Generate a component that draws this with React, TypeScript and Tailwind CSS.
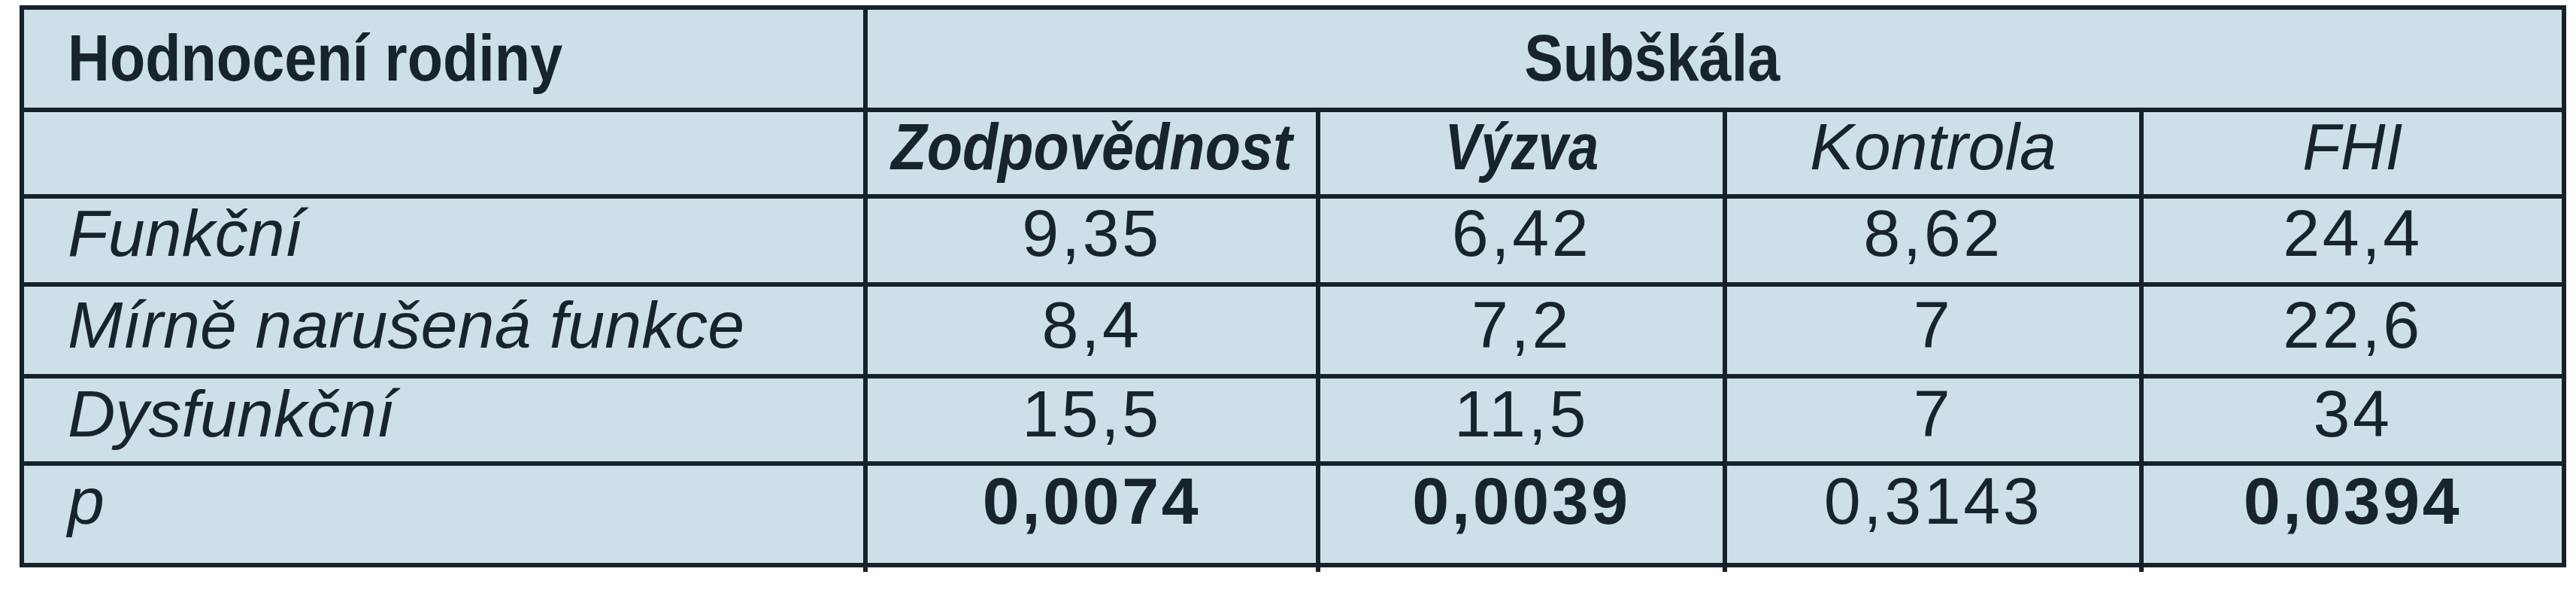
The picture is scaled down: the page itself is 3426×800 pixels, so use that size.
import React from "react";

type Row = {
  label: string;
  values: string[];
  bold: boolean[];
  pad: string;
};

const rows: Row[] = [
  { label: "Funkční", values: ["9,35", "6,42", "8,62", "24,4"], bold: [false, false, false, false], pad: "pt-[2px]" },
  { label: "Mírně narušená funkce", values: ["8,4", "7,2", "7", "22,6"], bold: [false, false, false, false], pad: "pt-[7px]" },
  { label: "Dysfunkční", values: ["15,5", "11,5", "7", "34"], bold: [false, false, false, false], pad: "pt-[3px]" },
  { label: "p", values: ["0,0074", "0,0039", "0,3143", "0,0394"], bold: [true, true, false, true], pad: "pt-[3px]" },
];

const cell = "bg-[#cde0e8]";

export default function App() {
  return (
    <div className="min-h-screen bg-white pl-[26px] pt-[7px] font-['Liberation_Sans',Arial,sans-serif] text-[88px] leading-none text-[#18242b]">
      <div className="w-[3387px]">
        <div className="grid grid-cols-[1116px_596px_535px_548px_556px] grid-rows-[130px_109px_111px_116px_110px_129px] gap-[6px] bg-[#16222a] p-[6px]">
          {/* hlavička */}
          <div className={`${cell} pl-[58px] pt-[20px]`}>
            <span className="inline-block origin-left scale-x-[0.88] font-bold">Hodnocení rodiny</span>
          </div>
          <div className={`${cell} col-span-4 flex justify-center pr-[167px] pt-[20px]`}>
            <span className="inline-block scale-x-[0.88] font-bold">Subškála</span>
          </div>

          <div className={cell} />
          <div className={`${cell} flex justify-center pt-[2px]`}>
            <span className="inline-block scale-x-[0.88] font-bold italic">Zodpovědnost</span>
          </div>
          <div className={`${cell} flex justify-center pt-[2px]`}>
            <span className="inline-block scale-x-[0.82] font-bold italic">Výzva</span>
          </div>
          <div className={`${cell} flex justify-center pt-[2px]`}>
            <span className="italic">Kontrola</span>
          </div>
          <div className={`${cell} flex justify-center pt-[2px]`}>
            <span className="inline-block scale-x-[0.94] italic">FHI</span>
          </div>

          {/* data */}
          {rows.map((r) => (
            <React.Fragment key={r.label}>
              <div className={`${cell} ${r.pad} pl-[58px] italic`}>{r.label}</div>
              {r.values.map((v, i) => (
                <div key={i} className={`${cell} ${r.pad} flex justify-center`}>
                  <span className={`tracking-[0.04em] ${r.bold[i] ? "font-bold" : "font-normal"}`}>{v}</span>
                </div>
              ))}
            </React.Fragment>
          ))}
        </div>

        {/* přesahy svislých čar */}
        <div className="grid h-[6px] grid-cols-[1116px_596px_535px_548px_556px] gap-[6px] px-[6px]">
          <div />
          <div className="-ml-[6px] w-[6px] bg-[#16222a]" />
          <div className="-ml-[6px] w-[6px] bg-[#16222a]" />
          <div className="-ml-[6px] w-[6px] bg-[#16222a]" />
          <div className="-ml-[6px] w-[6px] bg-[#16222a]" />
        </div>
      </div>
    </div>
  );
}
